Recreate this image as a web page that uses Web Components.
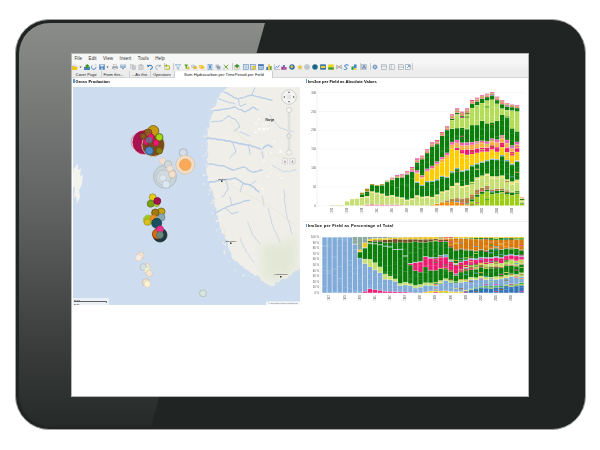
<!DOCTYPE html>
<html lang="en">
<head>
<meta charset="utf-8">
<title>Tablet dashboard</title>
<style>
html,body{margin:0;padding:0;background:#fff;font-family:"Liberation Sans",Arial,sans-serif}
body{width:600px;height:450px;overflow:hidden}
</style>
</head>
<body>
<tablet-frame>
  <app-window>
    <menu-bar slot="menu"></menu-bar>
    <tool-bar slot="tools"></tool-bar>
    <tab-strip slot="tabs"></tab-strip>
    <map-panel slot="left" heading="Gross Production"></map-panel>
    <chart-panel slot="right"></chart-panel>
  </app-window>
</tablet-frame>
<script>
function el(name,cls){customElements.define(name,cls)}
function shadow(host,html){host.attachShadow({mode:'open'}).innerHTML=html}
function rng(s){return()=>(s=(s*16807)%2147483647)/2147483647}

el('tablet-frame',class extends HTMLElement{constructor(){super();shadow(this,`<style>
:host{display:block;box-sizing:border-box;position:relative;width:571px;height:411px;margin:19px 0 0 15px;padding:33px 56px 32px 55px;border:1px solid #a2a2a2;border-radius:34px;background:#202423}
.glare{position:absolute;inset:3px;border-radius:31px;background:linear-gradient(180deg,#8a8c8a 0,#626463 45%,#3a3d3c 80%,#262a29 100%);clip-path:polygon(0 0,246px 0,132px 100%,0 100%)}
.screen{position:relative;display:block;height:100%}
</style><div class="glare"></div><div class="screen"><slot></slot></div>`)}});

el('app-window',class extends HTMLElement{constructor(){super();shadow(this,`<style>
:host{display:flex;flex-direction:column;box-sizing:border-box;height:100%;background:#fff;border:1px solid #b4b4b4;overflow:hidden}
.wrap{display:flex;flex-direction:column;height:100%;filter:blur(.3px)}
.body{display:flex;align-items:flex-start}
</style><div class="wrap"><slot name="menu"></slot><slot name="tools"></slot><slot name="tabs"></slot>
<div class="body"><slot name="left"></slot><slot name="right"></slot></div></div>`)}});

el('menu-bar',class extends HTMLElement{constructor(){super();shadow(this,`<style>
:host{display:flex;height:8px;align-items:center;background:#f6f6f6;padding-left:2.5px;gap:6.4px;font:4.5px "Liberation Sans",Arial,sans-serif;color:#333;letter-spacing:.1px}
</style><span>File</span><span>Edit</span><span>View</span><span>Insert</span><span>Tools</span><span>Help</span>`)}});

const I={
folder:'<path d="M0 2h2.5l.6.8H5.6L5 6H0z" fill="#f2c41e"/><path d="M1 1h3v1.4H1z" fill="#fff" stroke="#888" stroke-width=".3"/>',
caret:'<path d="M.5 2.5h2L1.500 4z" fill="#444"/>',
dbgreen:'<path d="M0 3h6v3H0z" fill="#4a7fb8"/><path d="M3.200 0 6 2.500H4.500V4H2V2.500H.5z" fill="#3c9a2a"/>',
cycle:'<path d="M1 1.500A2.300 2.300 0 1 0 5 3" fill="none" stroke="#4d8cc8" stroke-width="1"/><path d="M3 .2h2.500v2.300z" fill="#c6d6e6"/>',
save:'<rect x=".3" y=".3" width="5.400" height="5.400" fill="#3f78c0"/><rect x="1.300" y=".5" width="3.400" height="2" fill="#e6eef6"/><rect x="1.800" y="3.600" width="2.400" height="2" fill="#b9cfe6"/>',
print:'<rect x="1.400" y=".3" width="3.200" height="2" fill="#eee" stroke="#999" stroke-width=".3"/><rect x=".2" y="2.300" width="5.600" height="2.600" fill="#9fa6ad"/><rect x="1.400" y="4" width="3.200" height="1.700" fill="#f4f4f4" stroke="#999" stroke-width=".3"/>',
msg:'<rect x=".2" y=".6" width="5.600" height="3.400" fill="#8fb0cc"/><path d="M2 4h2.400l-1.700 1.600z" fill="#6c8aa6"/><rect x="1" y="1.400" width="3.800" height=".8" fill="#dfe9f2"/>',
copy:'<rect x=".4" y=".4" width="3.400" height="4" fill="#d8dbde" stroke="#aaa" stroke-width=".3"/><rect x="2.200" y="1.800" width="3.400" height="4" fill="#c4c9cf" stroke="#aaa" stroke-width=".3"/>',
paste:'<rect x=".8" y="1" width="4.400" height="4.800" fill="#cfd2d5" stroke="#aaa" stroke-width=".3"/><rect x="2" y=".2" width="2" height="1.300" fill="#b5b8bb"/>',
undo:'<path d="M1.400 2.300A2.100 2.100 0 1 1 3 5.400" fill="none" stroke="#2f6fb5" stroke-width="1"/><path d="M0 .6 2.800 1.800.8 3.600z" fill="#2f6fb5"/>',
redo:'<path d="M4.600 2.300A2.100 2.100 0 1 0 3 5.400" fill="none" stroke="#a2a8ae" stroke-width=".9"/><path d="M6 .6 3.200 1.800l2 1.800z" fill="#a2a8ae"/>',
back:'<path d="M1.800 1.800H4a1.700 1.700 0 0 1 0 3.500H1.200" fill="none" stroke="#b7bb1f" stroke-width="1.100"/><path d="M3 0v3.600L.4 1.800z" fill="#9eb81a"/>',
funnelblue:'<path d="M.2.6h5.600L3.700 3v2.600L2.300 4.800V3z" fill="#e8f0f8" stroke="#5c92c6" stroke-width=".5"/>',
funnelgreen:'<path d="M.2.4h4L2.900 2.400V5L1.600 4.400V2.400z" fill="#5ca82c"/><path d="M3.600 2.400h1v3.400h-1z" fill="#e5a52a"/><path d="M2.600 3.600h3v1h-3z" fill="#d8c41e"/>',
chain:'<ellipse cx="2" cy="2.300" rx="1.900" ry="1.300" fill="#dbe3ea" stroke="#7fa2c2" stroke-width=".4"/><ellipse cx="4" cy="3.600" rx="1.900" ry="1.300" fill="#e5c23a" stroke="#b6932a" stroke-width=".3"/>',
tag:'<path d="M.2 1h3l2.600 2.300L3.300 5.600.2 3.500z" fill="#f3c52b"/><circle cx="1.400" cy="2.200" r=".5" fill="#fff"/>',
doc:'<rect x="1" y=".2" width="4" height="5.600" fill="#dce8f4" stroke="#4a86c2" stroke-width=".5"/><rect x="2.200" y="1.300" width="1.600" height="3.200" fill="#3f78c0"/>',
layers:'<rect x=".6" y=".6" width="3.400" height="3.400" fill="#b6bcc2"/><rect x="2" y="2" width="3.400" height="3.400" fill="#8ea6bd"/>',
xgreen:'<path d="M.8.8 5.200 5.200M5.200.8.800 5.200" stroke="#70a83a" stroke-width="1"/><rect x="0" y="3.800" width="2" height="2" fill="#c9d5de"/>',
plusgreen:'<rect x=".6" y="1.500" width="4.800" height="4" fill="#e8e3cc" stroke="#999" stroke-width=".3"/><path d="M3 0v4M1 2h4" stroke="#2d8f2a" stroke-width="1.300"/>',
table:'<rect x=".3" y=".3" width="5.400" height="5.400" fill="#eef3f8" stroke="#4d7ead" stroke-width=".5"/><path d="M.3 2h5.400M.3 3.800h5.400M3 .3v5.400" stroke="#6d98c2" stroke-width=".4"/>',
tabley:'<rect x=".3" y=".3" width="5.400" height="5.400" fill="#c9d9e8" stroke="#3f6d9a" stroke-width=".4"/><rect x="2.600" y="2" width="3" height="3.600" fill="#e8c62a"/>',
tableb:'<rect x=".3" y=".3" width="5.400" height="5.400" fill="#d9e5f0" stroke="#2d68a8" stroke-width=".5"/><rect x=".6" y=".6" width="4.800" height="1.300" fill="#2d68a8"/><path d="M1 3h4M1 4.300h4" stroke="#2d68a8" stroke-width=".4"/>',
bars:'<rect x=".4" y="3" width="1.500" height="3" fill="#2d68a8"/><rect x="2.200" y=".4" width="1.600" height="5.600" fill="#e6b81e"/><rect x="4.100" y="2" width="1.500" height="4" fill="#57a22a"/>',
line:'<path d="M.4.3v5.300h5.400" fill="none" stroke="#7b8a98" stroke-width=".5"/><path d="M1 4.500 2.500 2.500 3.800 3.500 5.600 1" fill="none" stroke="#3a80c6" stroke-width=".7"/>',
pinkbars:'<rect x=".3" y="2.600" width="1.700" height="3.200" fill="#d6287a"/><rect x="2.200" y="1" width="1.600" height="4.800" fill="#3d62a8"/><rect x="4" y="3" width="1.700" height="2.800" fill="#e6488e"/>',
globe2:'<circle cx="3" cy="3" r="2.700" fill="#2b6cb5"/><path d="M1 2.300 3 1l1.300 1.800-1.500 2z" fill="#e8c620"/>',
star:'<path d="M3 .2 3.800 2.300 5.900 2.400 4.300 3.800 4.800 5.800 3 4.700 1.200 5.800 1.700 3.800.1 2.400 2.200 2.300z" fill="#e3c13a"/>',
ball:'<circle cx="3" cy="3" r="2.600" fill="#cfd6dc" stroke="#9aa5ae" stroke-width=".4"/><path d="M1 3h4M3 1v4" stroke="#9aa5ae" stroke-width=".4"/>',
globe:'<circle cx="3" cy="3" r="2.800" fill="#1e7c83"/><path d="M1.500 1.300 3.600 1 4.300 3 2.800 4.900 1.800 3.200z" fill="#2a4e9a"/>',
map:'<rect x=".2" y=".4" width="5.600" height="5.200" fill="#1f63ad"/><rect x=".8" y="1.800" width="4.400" height="2.400" fill="#e7cf2e"/>',
mapy:'<rect x=".2" y=".4" width="5.600" height="5.200" fill="#e9d622"/><rect x=".2" y="3.400" width="5.600" height="2.200" fill="#3e9a3c"/>',
link:'<path d="M.5 1 5.500 5M.5 5 5.500 1" stroke="#e08862" stroke-width=".8"/><rect x=".1" y="1" width="1.500" height="4" fill="#a9c0d8"/><rect x="4.400" y="1" width="1.500" height="4" fill="#a9c0d8"/>',
s:'<path d="M5 1.200C3 .2 1 1.200 2 2.700S5 3.700 3.400 5.200 1.600 5.300.8 4.800" fill="none" stroke="#1f6fbf" stroke-width="1"/><circle cx="4.800" cy="1.200" r="1" fill="#8fb9e0"/>',
greenb:'<rect x=".5" y="2.400" width="2.200" height="3.400" fill="#2d9a46"/><rect x="3" y=".4" width="2.500" height="3.600" fill="#3d88c8"/><rect x="3" y="4.200" width="2.500" height="1.600" fill="#e3cf32"/>',
A:'<rect x=".2" y=".2" width="5.600" height="5.600" fill="#c5d1de" stroke="#8da0b3" stroke-width=".3"/><path d="M1.300 5 3 1.200 4.700 5M2 3.700h2" fill="none" stroke="#51708f" stroke-width=".6"/>',
gear:'<circle cx="3" cy="3" r="2" fill="#78a2c8" stroke="#5a86ad" stroke-width="1" stroke-dasharray="1 .6"/><circle cx="3" cy="3" r=".8" fill="#eef2f6"/>',
w1:'<rect x=".3" y=".8" width="5.400" height="4.400" fill="#eef1f4" stroke="#76818c" stroke-width=".4"/><path d="M.3 2.300h5.400" stroke="#76818c" stroke-width=".4"/>',
w2:'<rect x=".3" y=".8" width="5.400" height="4.400" fill="#eef1f4" stroke="#76818c" stroke-width=".4"/><path d="M2.300.8v4.400" stroke="#76818c" stroke-width=".4"/>',
w3:'<rect x=".3" y=".8" width="5.400" height="4.400" fill="#eef1f4" stroke="#76818c" stroke-width=".4"/><path d="M.3 3h5.400" stroke="#76818c" stroke-width=".4"/>',
w4:'<rect x=".3" y=".8" width="5.400" height="4.400" fill="#f4f6f8" stroke="#5d7488" stroke-width=".4"/><path d="M2 4 4.500 1.600M3 1.600h1.500v1.500" fill="none" stroke="#2c6fae" stroke-width=".6"/>'
};
const TOOLS=[[75.3,'folder'],[80.7,'caret'],[86.7,'dbgreen'],[94.3,'cycle'],[102.3,'save'],[107.7,'caret'],[115,'print'],[123.3,'msg'],[132.7,'copy'],[140.7,'paste'],[150,'undo'],[158.3,'redo'],[164,'|'],[167.3,'back'],[173,'|'],[178.3,'funnelblue'],[186.7,'funnelgreen'],[194.3,'chain'],[202.3,'tag'],[210,'doc'],[217.7,'layers'],[225.7,'xgreen'],[232,'|'],[236.7,'plusgreen'],[245.7,'table'],[253.3,'tabley'],[261,'tableb'],[269,'bars'],[276.7,'line'],[284.3,'pinkbars'],[292,'globe2'],[300,'star'],[307.3,'ball'],[315.3,'globe'],[323.3,'map'],[331,'mapy'],[339,'link'],[346.7,'s'],[354.3,'greenb'],[360,'|'],[364,'A'],[370,'|'],[375.3,'gear'],[384.3,'w1'],[392.7,'w2'],[401,'w3'],[408.3,'w4'],[413,'|']];

el('tool-bar',class extends HTMLElement{constructor(){super();
let prev=72,h='';
for(const [c,n] of TOOLS){
  const w=n==='|'?.5:n==='caret'?3:6, ml=(c-w/2-prev).toFixed(2);prev=c+w/2;
  h+=n==='|'?`<i style="margin-left:${ml}px"></i>`:`<svg width="${w}" height="6" viewBox="0 0 ${w} 6" style="margin-left:${ml}px">${I[n]}</svg>`;
}
shadow(this,`<style>
:host{display:flex;height:9px;align-items:center;background:linear-gradient(#f7f7f7,#ececec);box-sizing:border-box}
svg{display:block;flex:none}
i{display:block;flex:none;width:.5px;height:7px;background:#c9c9c9}
</style>${h}`)}});

el('tab-strip',class extends HTMLElement{constructor(){super();shadow(this,`<style>
:host{display:flex;height:7px;align-items:stretch;background:#ececec;padding-left:2px;font:4px "Liberation Sans",Arial,sans-serif;color:#222;box-sizing:border-box;border-bottom:.5px solid #d6d6d6}
span{display:flex;align-items:center;box-sizing:border-box;border-right:.5px solid #cfcfcf}
.a{width:27.500px;padding-left:1.500px}.b{width:28.500px;padding-left:2px}.c{width:21px;padding-left:2px}.d{width:24px;padding-left:2px}
.on{width:98px;background:#fff;border-right:.5px solid #ccc;padding-left:9px;font-size:4.150px;margin-bottom:-.5px}
</style><span class="a">Cover Page</span><span class="b">From this...</span><span class="c">...As this</span><span class="d">Operators</span><span class="on">Sum Hydrocarbon per TimePeriod per Field</span>`)}});

el('panel-title',class extends HTMLElement{constructor(){super();shadow(this,`<style>
:host{display:flex;align-items:center;gap:.8px;height:6px;font:bold 4.050px "Liberation Sans",Arial,sans-serif;color:#000;white-space:nowrap}
b{display:block;flex:none;width:1.800px;height:3.200px;background:#5b9ad6}
</style><b></b><slot></slot>`)}});

const CIRCLES=[
[144.500,142.300,12.500,'#a8124f','#fff',1],[153.300,145,11.500,'#7a4a1a','#f0e8e0',1],[153.300,131,5.500,'#c79a10','#5e4c0c',1],[148,133,4,'#9a6420','#5a3a10',1],[143,136,3.300,'#8a5a20','#5a3a10',1],[159.300,137.300,3.700,'#a6d616','#35560a',1],[151,137.300,3.300,'#ee1a70','#c01060',.95],[146,141.700,2.800,'#ee1a70','#c01060',.9],[156,142.700,3,'#ee1a70','#c01060',.95],[149,140,3,'#5e7fa0','#55708c',.8],[149.300,150.700,4,'#4a88c8','#2a5a8a',1],[159.300,150.700,3.200,'#8a7a10','#5a500c',1],[147,139,7,'none','#8c1040',.6],[140,142,9,'none','#8c1040',.5],
[183.300,152.700,4,'#d5dde8','#9aa7b0',1],[185.300,164.700,9.500,'#f2dcc4','#cdc2b0',1],[185.300,164.700,5.700,'#f8aa58','#ea9a48',1],[162.700,161,3.300,'#f0e0d0','#d8ccc0',1],
[165,176.700,11.500,'#c9d4d7','#a6b2b7',.95],[163.500,177.500,7.500,'#d0dade','#b4c0c4',1],[163,178,3.300,'#dfe8eb','#c2ced2',1],[168,164.300,3.700,'#d4dadc','#a8b0b3',1],[170,168.700,3.300,'#f1e2d6','#d0c6bd',1],[172.300,174.300,3.700,'#f1dfd0','#c4b3a0',1],[166,184.300,4,'#dce7f2','#afbdca',1],
[152.700,197.300,3.500,'#e8cc10','#8a8a50',1],[150.700,203.700,3.500,'#7aa010','#56701a',1],[156.700,204,2.700,'#b8d83a','#7a9a20',1],[157.300,201,3.500,'#a8124f','#6a0c30',1],
[161.300,211.700,3.700,'#c8a010','#6e5a0a',1],[161.300,217.300,3.700,'#8aa8b0','#60808a',1],[155.300,212.700,3.700,'#a07a10','#5e480a',1],[148.300,220,5,'#a0c820','#a8b86a',1],[147.300,222,3.300,'#d8c020','#a09020',1],[153.300,218,3,'#f09020','#d07810',1],[156.700,223.300,5,'#1a5060','#0e3440',1],
[160,235,7,'#203840','#14262c',1],[157.300,234,5,'#d86a10','#7a3c10',1],[160,229.300,3.500,'#f03090','#c02070',1],[160,235,3.400,'#6a8a80','#4e6a60',1],
[140.700,255.300,3.300,'#f1e6d8','#d6c4ae',1],[138.700,257.700,3.300,'#f5ece2','#dccdbb',1],[146.700,266.700,3.300,'#f2e4d2','#d8c8b2',1],[143.300,267,3.300,'#d4dfe6','#b0bcc4',1],[147.300,270,3,'#eef4d8','#d6dcb8',1],[149.300,273.300,3.300,'#f3e6d6','#d6c6b0',1],[146,282.300,3.600,'#efe0cc','#c8b8a2',1],[147.300,284,3.200,'#fdf4d8','#e0d4b4',1],[203,293.300,3.500,'#d8e4dc','#a9b6b0',1]];

function jag(pts,r,amp,closeTail){
  let d='M'+pts[0].join(' ');
  for(let i=1;i<pts.length;i++){
    const [a,b]=pts[i-1],[c,e]=pts[i],len=Math.hypot(c-a,e-b),n=Math.max(1,Math.round(len/2.2));
    for(let j=1;j<=n;j++){
      const t=j/n,jx=j===n?0:(r()-.5)*amp*2,jy=j===n?0:(r()-.5)*amp*2;
      d+=`L${(a+(c-a)*t+jx).toFixed(1)} ${(b+(e-b)*t+jy).toFixed(1)}`;
    }
  }
  return d+(closeTail||'');
}
const COAST=[[228,87],[221,93],[217,100],[214,107],[212,115],[210,124],[208,133],[207,141],[208,152],[208,162],[207,172],[208,181],[212,190],[215,199],[216,208],[218,216],[220,225],[224,234],[227,240],[229,250],[232,258],[240,265],[248,270],[257,275],[265,283],[272,286],[280,280],[288,277],[294,272],[300,268]];
const FJ=[
[1.300,[[224,92],[232,96],[238,99],[245,97],[252,95],[262,98],[272,100]]],
[1,[[238,99],[240,106],[246,104]]],[1,[[252,95],[255,88]]],[1,[[219,99],[228,102],[235,104]]],
[1.300,[[213,111],[226,109],[235,107],[245,112],[253,107],[258,110]]],
[1,[[228,116],[236,120],[240,127],[234,131]]],[1,[[211,122],[222,121],[228,116]]],
[1.600,[[207,138],[222,140],[232,142],[248,145],[262,149],[268,145],[272,147]]],
[1,[[232,142],[236,151],[230,158]]],[1,[[248,145],[250,154]]],[1,[[262,149],[263,158]]],[.9,[[240,132],[250,136]]],
[1.300,[[209,164],[224,166],[232,170],[244,167],[252,172],[262,170]]],
[1.500,[[209,182],[224,180],[235,178],[243,183],[250,185],[259,192]]],
[1,[[243,183],[240,192]]],[1,[[226,180],[228,190],[222,197]]],[.9,[[250,185],[256,181]]],
[1.300,[[215,213],[225,208],[232,205],[242,202],[250,200]]],[1,[[225,208],[232,214],[238,212]]],[.9,[[232,205],[230,197]]],
[.7,[[248,222],[252,234],[260,244]]],[.7,[[268,208],[272,224],[280,242]]],[.7,[[284,190],[286,212],[292,234]]],[.7,[[240,238],[246,252],[254,262]]],[.7,[[262,196],[264,206]]],[.7,[[270,115],[280,128],[294,132]]],[.7,[[272,165],[284,172],[296,170]]]
];

el('map-panel',class extends HTMLElement{constructor(){super();
const cs=CIRCLES.map(c=>`<circle cx="${c[0]}" cy="${c[1]}" r="${c[2]}" fill="${c[3]}" stroke="${c[4]}" stroke-width=".7" opacity="${c[5]}"/>`).join('');
const r=rng(4242);
const coast=jag(COAST,r,1.300,'V87z');
const fj=FJ.map(f=>`<path class="f" stroke-width="${f[0]}" d="${jag(f[1],r,.5)}"/>`).join('');
let isl='';
for(const c of COAST.slice(2,24)){for(let k=0;k<2;k++){isl+=`<circle cx="${(c[0]-1-r()*4).toFixed(1)}" cy="${(c[1]+r()*6).toFixed(1)}" r="${(.4+r()*.7).toFixed(1)}"/>`}}
let gl='';
for(let k=0;k<14;k++){gl+=`<circle cx="${(255+r()*13).toFixed(1)}" cy="${(133-r()*14).toFixed(1)}" r="${(.5+r()*.9).toFixed(1)}"/>`}
for(let k=0;k<14;k++){gl+=`<circle cx="${(258+r()*30).toFixed(1)}" cy="${(140+r()*50).toFixed(1)}" r="${(.4+r()*.6).toFixed(1)}"/>`}
shadow(this,`<style>
:host{display:block;flex:none;width:231px;box-sizing:border-box;padding-left:1px}
svg{display:block;width:227px;height:218px;margin-top:3px}
text{font-family:"Liberation Sans",Arial,sans-serif;fill:#222}
.f{fill:none;stroke:#b8cde7;stroke-linecap:round;stroke-linejoin:round}
.r{fill:none;stroke:#e6e0c4;stroke-width:.45}
</style><panel-title>${this.getAttribute('heading')}</panel-title>
<svg viewBox="73 87 227 218" role="img" aria-label="Map of fields off Norway">
<defs><filter id="s" x="-20%" y="-20%" width="140%" height="140%"><feGaussianBlur stdDeviation="4"/></filter></defs>
<rect x="73" y="87" width="227" height="218" fill="#cddcee"/>
<path d="${coast}" fill="#efeee8" stroke="#f6f6f2" stroke-width=".4"/>
<path d="M262 245 285 242 296 236V268L288 274 280 278 272 282 262 277z" fill="#dfe6d0" opacity=".75" filter="url(#s)"/>
<g fill="#efeee8">${isl}</g>
${fj}
<path class="r" d="M224 242 225 232 222 224M222 178 232 186 250 196 270 206 296 226M230 120 240 136 262 152 296 160M282 276 286 262 298 250"/>
<g fill="#fff">${gl}</g>
<path d="M75 167 78 164 78 170 81 168 80 176 83 175 82 184 79 190 80 197 77 204 76 196 74 198 75 186 73 188V170z" fill="#f4f4ef"/>
${cs}
<g>
<circle cx="289" cy="97" r="7.300" fill="#f4f5f3" stroke="#c4c7c8" stroke-width=".8"/>
<circle cx="289" cy="97" r="2.500" fill="#e5e6e5"/>
<path d="M289 91.200 287.800 93h2.400zM289 102.800 287.800 101h2.400zM283.200 97 285 95.800v2.400zM294.800 97 293 95.800v2.400z" fill="#777"/>
<rect x="288.100" y="110" width="1.800" height="42" fill="#e8e9e7" stroke="#c8cbcb" stroke-width=".4"/>
<circle cx="289" cy="110" r="2.600" fill="#f5f5f4" stroke="#b4b7b8" stroke-width=".5"/>
<circle cx="289" cy="136" r="2.200" fill="#e8e9e8" stroke="#b4b7b8" stroke-width=".5"/>
<circle cx="289" cy="152.500" r="2.600" fill="#f5f5f4" stroke="#b4b7b8" stroke-width=".5"/>
<rect x="282.500" y="158.500" width="5" height="5.500" rx="1" fill="#f3f3f2" stroke="#bcbfc0" stroke-width=".5"/>
<rect x="290" y="158.500" width="5" height="5.500" rx="1" fill="#f3f3f2" stroke="#bcbfc0" stroke-width=".5"/>
<path d="M284 162.500 285 160 286 162.500zM291.500 162.500 292.500 160 293.500 162.500z" fill="#888"/>
</g>
<text x="265.500" y="121" font-size="3" font-weight="bold">Norge</text>
<rect x="221" y="180.500" width="1.500" height="1.500" fill="#333"/><text x="222" y="179.500" font-size="2.400" text-anchor="middle">Bergen</text>
<rect x="230" y="242.500" width="1.500" height="1.500" fill="#333"/><text x="231" y="241.500" font-size="2.400" text-anchor="middle">Stavanger</text>
<rect x="280" y="276" width="1.500" height="1.500" fill="#333"/><text x="281" y="275" font-size="2.400" text-anchor="middle">Kristiansand</text>
<rect x="73" y="298" width="36" height="7" fill="#f4f6f8" opacity=".75"/>
<text x="74" y="300.500" font-size="2.200">20 km</text><path d="M74 301.500h32.500v1.300" fill="none" stroke="#222" stroke-width=".7"/><text x="74" y="304.700" font-size="2.200">20 mi</text>
<rect x="266" y="301.500" width="34" height="3.500" fill="#fff" opacity=".75"/><text x="268" y="304.200" font-size="2.200" style="fill:#666">© OpenStreetMap contributors</text>
</svg>`)}});

const G='#0a7d0a';
const ABS=[
['#ee4f9c',{7:0,8:2,9:4,14:3,16:0}],
['#9ccc14',{28:0,29:12,30:25,32:37,34:36,38:30,39:5}],
['#f58a00',{20:0,21:2,23:10,27:8,28:3,29:0}],
[G,{27:0,29:6,32:6,38:8,39:2}],
['#b08040',{22:0,25:8,27:14,30:14,32:10,36:4,38:0}],
['#c6de72',{0:0,1:2,3:2,4:13,5:20,6:22,7:20,8:22,9:32,10:35,11:32,12:28,13:26,14:24,15:20,16:18,17:20,18:24,19:25,20:24,21:22,22:22,23:28,24:30,26:32,28:32,30:30,32:28,36:24,38:20,39:5}],
['#f2e27a',{5:0,8:4,20:4,30:6,38:8,39:3}],
[G,{6:0,7:8,8:15,9:18,10:22,11:28,12:45,13:52,14:68,15:78,16:86,17:92,18:36,19:35,20:40,21:42,22:48,23:45,24:35,25:35,26:40,27:42,28:45,29:42,30:40,32:42,36:50,38:45,39:4}],
['#6ea0d8',{17:0,18:3,30:3,38:3,39:1}],
['#ffcc00',{17:0,18:20,19:22,20:30,21:38,22:36,23:45,24:55,25:55,26:52,27:50,28:40,29:35,30:32,32:28,34:22,36:22,38:20,39:2}],
['#ee1a70',{25:0,26:6,27:10,28:14,30:12,32:12,34:14,38:10,39:1}],
['#fbb040',{17:0,18:4,20:4,24:10,26:14,28:12,30:14,34:12,38:10,39:1}],
['#f060b0',{14:0,16:4,18:6,28:8,38:8,39:1}],
[G,{17:0,19:48,20:52,21:60,22:55,23:70,24:72,25:40,26:30,27:40,28:42,29:45,30:50,32:52,34:50,35:62,36:60,38:30,39:0}],
['#b4dc58',{24:0,25:22,26:35,27:30,28:45,29:52,30:55,32:60,33:62,34:50,35:18,36:20,37:45,38:52,39:0}],
[G,{24:0,25:4,28:6,29:12,33:12,38:8,39:0}],
['#e88a70',{10:0,14:3,20:6,30:6,38:5,39:0}],
['#a88a1a',{6:0,7:5,8:9,9:3,12:3,18:2,25:3,38:2,39:0}],
['#ef3f98',{12:0,13:3,17:4,30:3,38:2,39:0}]
];
const ABSTOP=[0,2,2,2,13,20,22,39,51,65,62,65,75,84,92,94,104,116,142,150,169,190,197,221,238,274,292,282,292,317,324,332,336,341,327,316,307,304,302,26];
const PCT=[
['#ee1a70',{7:0,8:3,9:7,10:6,11:4,12:3,14:2,17:1,18:0}],
['#2f72b8',{27:0,29:5,31:9,34:11,37:12,39:14}],
['#3aa83a',{27:0,30:2,39:4}],
['#f0c820',{19:0,21:3,24:3,27:2,30:0}],
['#80aad8',{0:100,5:100,6:88,7:58,8:50,9:38,10:34,11:30,12:24,13:20,14:16,15:12,16:11,18:9,22:9,23:12,24:15,25:16,27:16,29:14,31:14,34:14,37:12,39:10}],
['#c6de72',{7:0,8:8,9:12,10:14,11:12,12:9,13:6,14:5,16:4,20:4,24:3,30:4,38:6}],
[G,{6:0,7:12,8:18,9:26,10:34,11:40,12:48,13:52,14:56,15:58,16:48,17:36,18:24,19:20,20:24,21:22,22:20,23:18,24:14,25:14,26:12,28:14,30:14,32:16,36:16,39:14}],
['#a06a30',{22:0,25:3,28:5,30:4,34:3,38:2}],
['#b4dc58',{27:0,29:3,30:4,34:6,37:8,39:8}],
['#ee1a70',{16:0,17:2,18:14,19:14,20:16,21:18,22:18,23:18,24:16,25:14,26:14,27:12,28:10,30:10,32:10,34:9,36:10,38:8,39:6}],
['#80aad8',{20:1,24:4,28:2,36:2}],
[G,{8:0,15:12,16:22,17:38,18:30,19:30,20:24,21:22,22:24,23:22,24:20,25:22,26:20,28:14,30:14,32:14,34:14,36:12,39:10}],
['#6b4a20',{8:0,9:2,14:6,20:4,24:3,30:1}],
['#d9780a',{22:0,24:2,25:12,26:18,27:18,28:18,30:20,32:18,34:16,36:16,38:16,39:16}],
[G,{24:0,28:1,30:2,34:4,39:3}],
['#f0c820',{6:0,7:3,8:8,9:3,14:3,20:4,24:3,30:2,38:2}],
['#8aa8a0',{5:0,6:12,7:26,8:10,9:4,10:3,14:1,20:0}]
];
const MIX=['#b4dc58','#ee4f9c','#fbb040','#6ea0d8','#a06a30','#f2e27a','#2e9a2e'];
function at(k,i){const x=Object.keys(k).map(Number);if(i<=x[0])return k[x[0]];for(let n=1;n<x.length;n++){if(i<=x[n]){const a=x[n-1],b=x[n];return k[a]+(k[b]-k[a])*(i-a)/(b-a)}}return k[x[x.length-1]]}

el('stack-chart',class extends HTMLElement{constructor(){super();
const pct=this.hasAttribute('percent');
const r=rng(pct?77:1234);
const vb=pct?[303,229,225,77]:[303,84,225,135];
const base=pct?293:205.7, span=pct?56:113, bx=pct?322.3:325, pitch=pct?5.05:5, bw=pct?4.45:4.3, axisX=pct?320:317;
let o='';
const ticks=pct?[100,90,80,70,60,50,40,30,20,10,0]:[300,250,200,150,100,50,0];
ticks.forEach(v=>{
  const y=pct?base-span*v/100:base-v*(113/300);
  o+=`<path d="M${axisX} ${y.toFixed(1)}H525" stroke="#f1f1f1" stroke-width=".5"/>`;
  o+=`<text x="${axisX-1}" y="${(y+1).toFixed(1)}" text-anchor="end">${v}${pct?' %':''}</text>`;
});
o+=`<path d="M${axisX} ${pct?236:88}V${base+1}" stroke="#e2e2e2" stroke-width=".5"/>`;
const layers=pct?PCT:ABS;
for(let i=0;i<40;i++){
  const th=layers.map(l=>Math.max(0,at(l[1],i)*(0.86+r()*0.28)));
  const sum=th.reduce((a,b)=>a+b,0)||1;
  const total=pct?span:ABSTOP[i]/3;
  let y=base;const x=(bx+i*pitch).toFixed(2);
  layers.forEach((l,n)=>{
    const h=th[n]/sum*total;if(h<.05)return;
    y-=h;
    o+=`<rect x="${x}" y="${y.toFixed(2)}" width="${bw}" height="${Math.max(h-.22,.2).toFixed(2)}" fill="${l[0]}"/>`;
    if(h>3){const k=1+Math.floor(h/7);for(let j=0;j<k;j++){const ly=y+r()*h;
      o+=`<rect x="${x}" y="${ly.toFixed(2)}" width="${bw}" height=".35" fill="#fff" opacity="${l[0]===G?.22:.3}"/>`}}
    if(h>1.500&&i>=(pct?22:26)&&r()<(pct?.75:.3)){const ly=y+r()*(h-.8);
      o+=`<rect x="${x}" y="${ly.toFixed(2)}" width="${bw}" height=".8" fill="${MIX[Math.floor(r()*MIX.length)]}"/>`}
  });
}
for(let i=1;i<40;i+=3){
  const x=bx+i*pitch+bw/2+.8, yb=base+2;
  o+=`<text class="yr" transform="translate(${x.toFixed(1)} ${yb}) rotate(-90)" text-anchor="end">${1971+i}</text>`;
}
shadow(this,`<style>
:host{display:block}
svg{display:block;width:${vb[2]}px;height:${vb[3]}px}
text{font:2.800px "Liberation Sans",Arial,sans-serif;fill:#555}
.yr{font-size:2.600px}
</style><svg viewBox="${vb.join(' ')}" role="img" aria-label="Stacked bars">${o}</svg>`)}});

el('chart-panel',class extends HTMLElement{constructor(){super();shadow(this,`<style>
:host{display:block;flex:none;width:225px;box-sizing:border-box}
panel-title{margin-left:2.500px}
.second{letter-spacing:.28px;height:7px}
hr{border:0;border-top:1px solid #f0f0f0;margin:2px 0 0}
</style>
<panel-title>km3oe per Field as Absolute Values</panel-title>
<stack-chart></stack-chart>
<hr>
<panel-title class="second">km3oe per Field as Percentage of Total</panel-title>
<stack-chart percent></stack-chart>`)}});
</script>
</body>
</html>
